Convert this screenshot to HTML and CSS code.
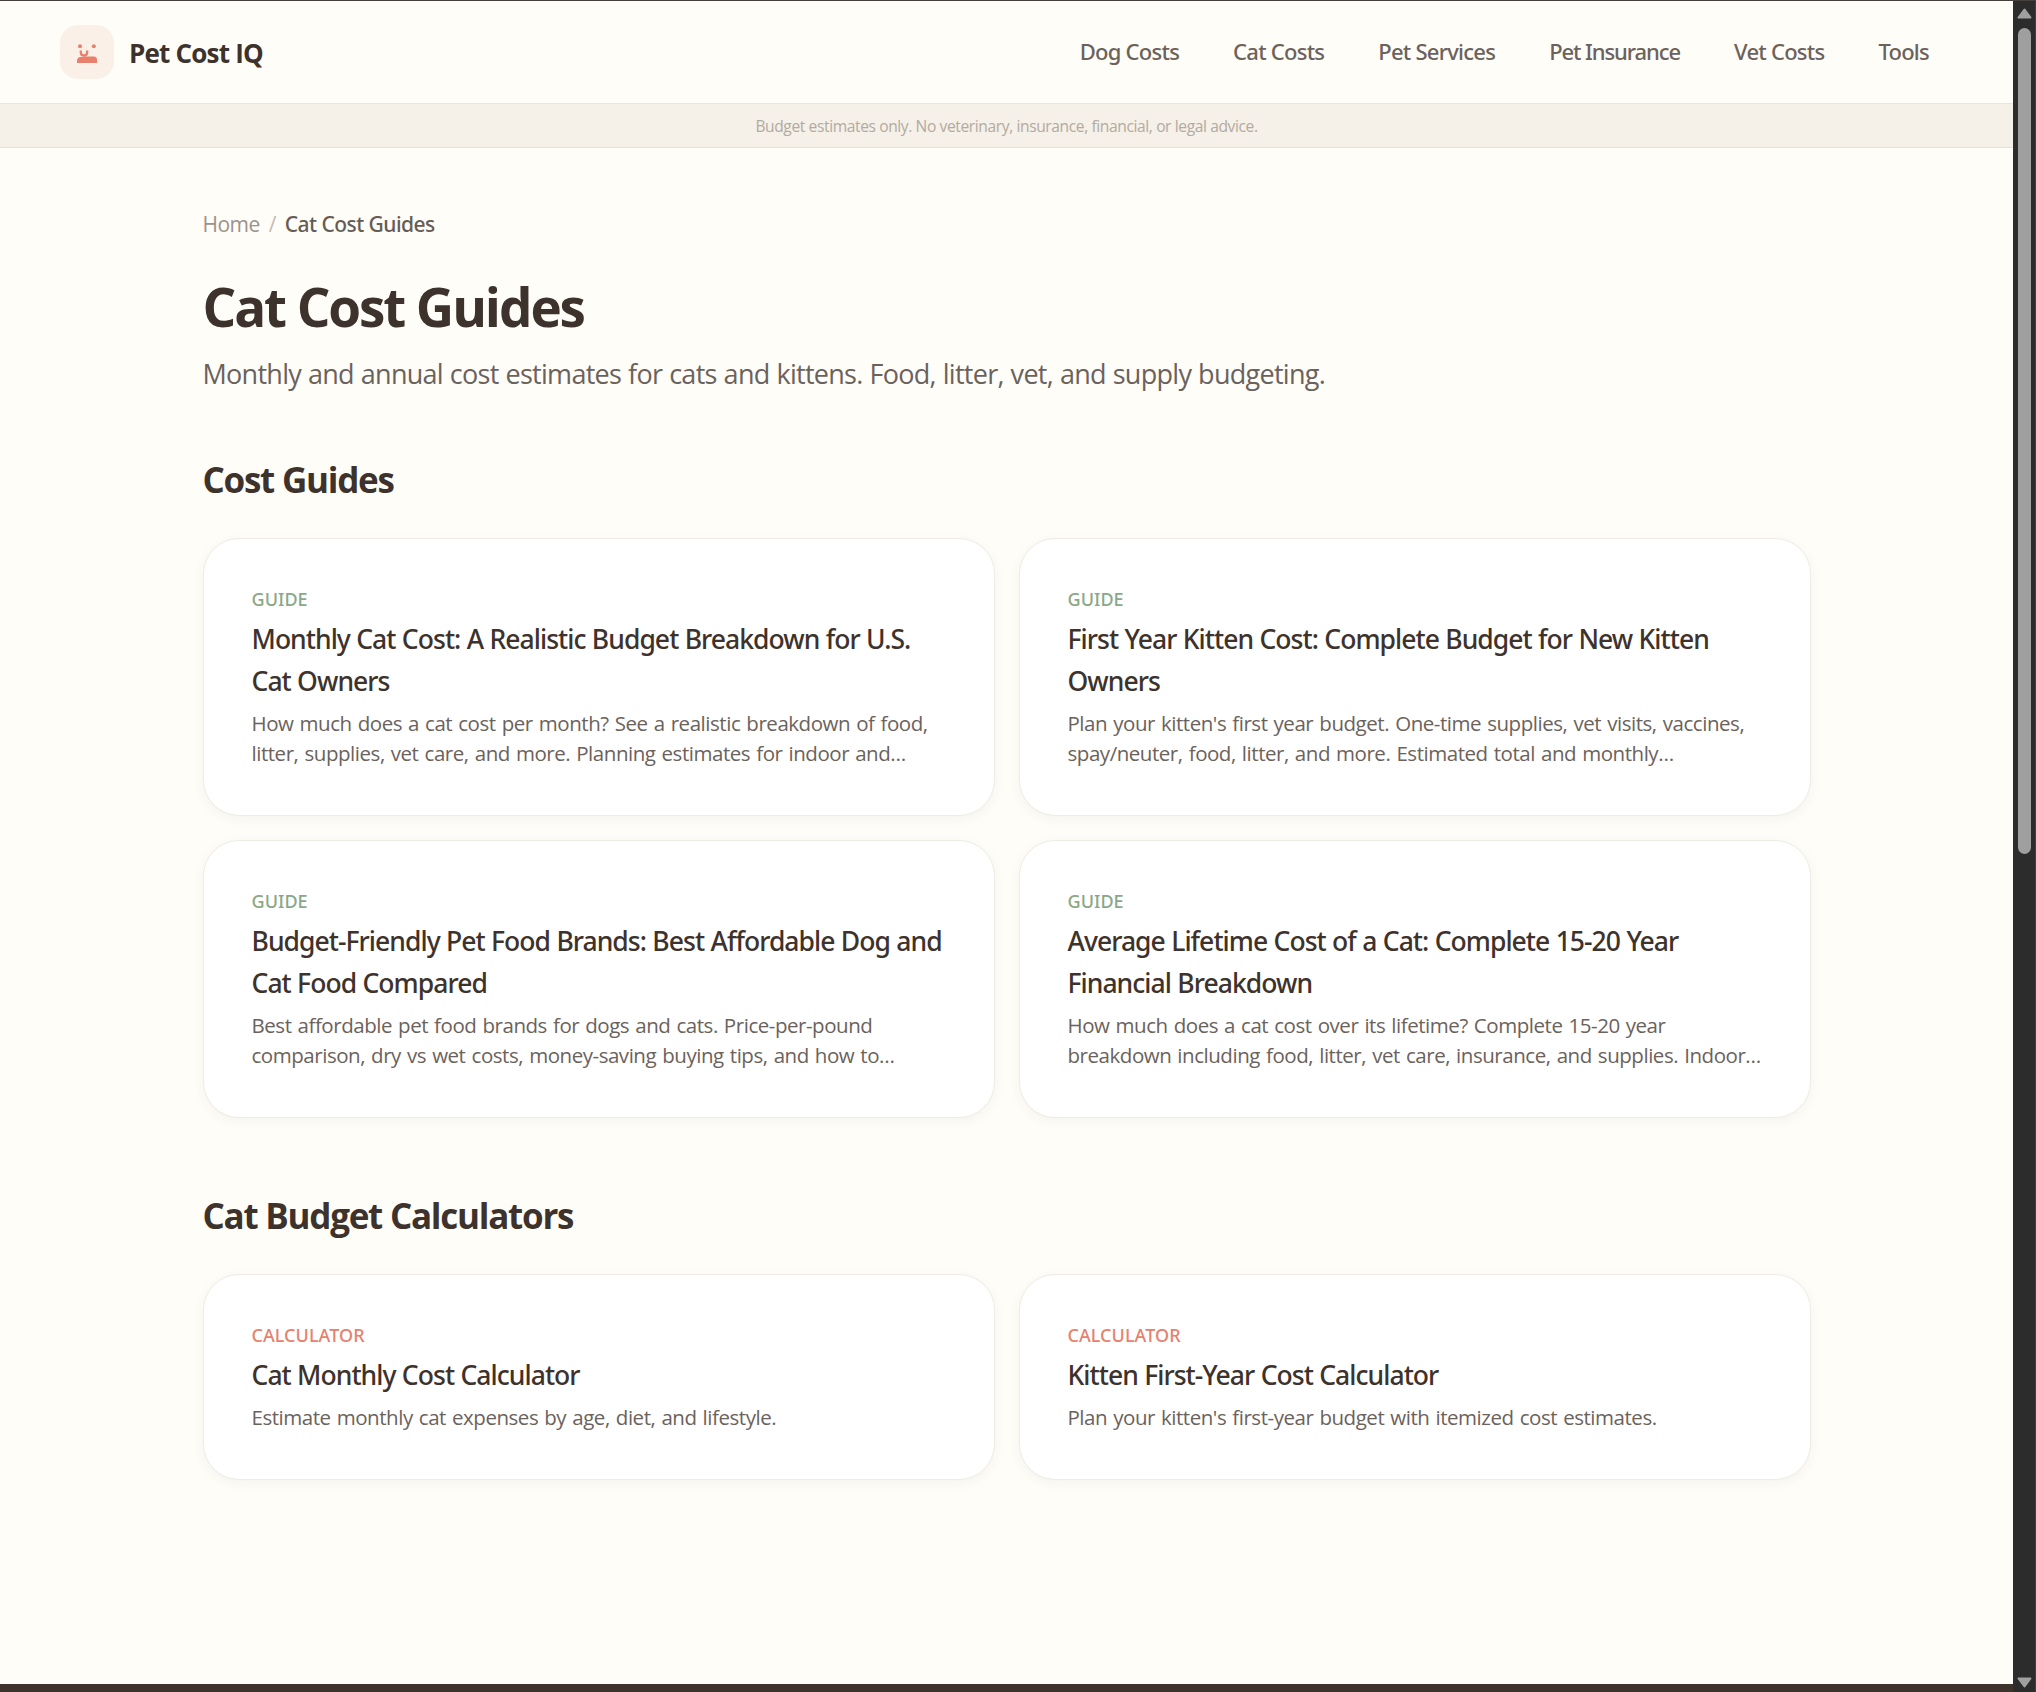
FILE: index.html
```html
<!DOCTYPE html>
<html lang="en">
  <head>
    <meta charset="utf-8">
    <title>Cat Cost Guides | Pet Cost IQ</title>
    <link rel="stylesheet" href="styles.css">
  </head>
  <body>
    <div class="page">
      <header class="site-header">
        <a class="logo" href="#">
          <span class="logo-mark">
            <svg width="54" height="54" viewBox="0 0 54 54">
              <circle cx="20" cy="21.3" r="2" fill="#e8806c"/>
              <circle cx="33.8" cy="21.3" r="2" fill="#e8806c"/>
              <path d="M20.8 25.4v2c0 2 1.2 3.1 3.1 3.1s3.2-1.1 3.2-3.1v-2" fill="none" stroke="#e8806c" stroke-width="2.3"/>
              <path d="M17 38v-2.500c0-1.800 1.500-3.500 3.500-3.500h2l2.500-.5h9c2 0 3 1.500 3 3.500v3z" fill="#e8806c"/>
            </svg>
          </span>
          <span class="logo-text">Pet Cost IQ</span>
        </a>
        <nav class="site-nav">
          <a href="#">Dog Costs</a>
          <a href="#">Cat Costs</a>
          <a href="#">Pet Services</a>
          <a href="#" class="long">Pet Insurance</a>
          <a href="#">Vet Costs</a>
          <a href="#">Tools</a>
        </nav>
      </header>
      <div class="disclaimer">Budget estimates only. No veterinary, insurance, financial, or legal advice.</div>

      <main>
        <div class="breadcrumb">
          <a href="#">Home</a>
          <span class="sep">/</span>
          <span class="current">Cat Cost Guides</span>
        </div>
        <h1>Cat Cost Guides</h1>
        <p class="subtitle">Monthly and annual cost estimates for cats and kittens. Food, litter, vet, and supply budgeting.</p>

        <section>
          <h2>Cost Guides</h2>
          <div class="cards">
            <a class="card" href="#">
              <span class="tag">GUIDE</span>
              <h3>Monthly Cat Cost: A Realistic Budget Breakdown for U.S.<br>Cat Owners</h3>
              <p>How much does a cat cost per month? See a realistic breakdown of food,<br>litter, supplies, vet care, and more. Planning estimates for indoor and…</p>
            </a>
            <a class="card" href="#">
              <span class="tag">GUIDE</span>
              <h3>First Year Kitten Cost: Complete Budget for New Kitten<br>Owners</h3>
              <p>Plan your kitten's first year budget. One-time supplies, vet visits, vaccines,<br>spay/neuter, food, litter, and more. Estimated total and monthly…</p>
            </a>
            <a class="card" href="#">
              <span class="tag">GUIDE</span>
              <h3>Budget-Friendly Pet Food Brands: Best Affordable Dog and<br>Cat Food Compared</h3>
              <p>Best affordable pet food brands for dogs and cats. Price-per-pound<br>comparison, dry vs wet costs, money-saving buying tips, and how to…</p>
            </a>
            <a class="card" href="#">
              <span class="tag">GUIDE</span>
              <h3>Average Lifetime Cost of a Cat: Complete 15-20 Year<br>Financial Breakdown</h3>
              <p>How much does a cat cost over its lifetime? Complete 15-20 year<br>breakdown including food, litter, vet care, insurance, and supplies. Indoor…</p>
            </a>
          </div>
        </section>

        <section>
          <h2>Cat Budget Calculators</h2>
          <div class="cards">
            <a class="card" href="#">
              <span class="tag tag-calc">CALCULATOR</span>
              <h3>Cat Monthly Cost Calculator</h3>
              <p>Estimate monthly cat expenses by age, diet, and lifestyle.</p>
            </a>
            <a class="card" href="#">
              <span class="tag tag-calc">CALCULATOR</span>
              <h3>Kitten First-Year Cost Calculator</h3>
              <p>Plan your kitten's first-year budget with itemized cost estimates.</p>
            </a>
          </div>
        </section>
      </main>
      <footer></footer>
    </div>

    <div class="scrollbar">
      <svg width="15" height="11" viewBox="0 0 15 11"><path d="M7.500 1.500L13.500 9.500H1.500z" fill="#a0a0a0" stroke="#a0a0a0" stroke-width="2" stroke-linejoin="round"/></svg>
      <div class="thumb"></div>
      <svg width="15" height="11" viewBox="0 0 15 11"><path d="M7.500 9.500L13.500 1.500H1.500z" fill="#a0a0a0" stroke="#a0a0a0" stroke-width="2" stroke-linejoin="round"/></svg>
    </div>
  </body>
</html>
```
FILE: styles.css
```css
* {
  box-sizing: border-box;
}

body {
  margin: 0;
  height: 1692px;
  display: flex;
  overflow: hidden;
  border-top: 1px solid #45403c;
  background: #fffdf8;
  color: #3d322c;
  font-family: "Open Sans", "Noto Sans", sans-serif;
}

a {
  color: inherit;
  text-decoration: none;
}

h1, h2, h3, p {
  margin: 0;
}

.page {
  flex: 1;
  display: flex;
  flex-direction: column;
}

/* header */
.site-header {
  height: 103px;
  padding: 0 60px;
  display: flex;
  align-items: center;
  justify-content: space-between;
  border-bottom: 1px solid #ebe5dc;
}

.logo {
  display: flex;
  align-items: center;
  gap: 15px;
}

.logo-mark {
  width: 54px;
  height: 54px;
  border-radius: 18px;
  background: #faf0e8;
}

.logo-mark svg {
  display: block;
}

.logo-text {
  padding-top: 2px;
  font-size: 26px;
  font-weight: 700;
  letter-spacing: -0.8px;
}

.site-nav {
  display: flex;
  gap: 6px;
  padding-bottom: 2px;
}

.site-nav a {
  padding: 0 24px;
  font-family: "Noto Sans", sans-serif;
  font-size: 22px;
  font-weight: 500;
  letter-spacing: -0.75px;
  color: #6b625c;
}

.site-nav a.long {
  letter-spacing: -1.08px;
}

.disclaimer {
  height: 44px;
  line-height: 44px;
  border-bottom: 1px solid #e8dfd5;
  background: #f5f0e8;
  text-align: center;
  font-size: 15.6px;
  letter-spacing: -0.4px;
  color: #b3aaa0;
}

/* content */
main {
  width: 1608px;
  margin: 0 auto;
  padding-top: 61px;
  flex: 1;
}

.breadcrumb {
  display: flex;
  gap: 9px;
  font-size: 21px;
  line-height: 30px;
  letter-spacing: -0.55px;
  color: #9c928a;
}

.breadcrumb .sep {
  color: #c4bcb4;
}

.breadcrumb .current {
  font-family: "Noto Sans", sans-serif;
  font-weight: 500;
  color: #665c55;
}

h1 {
  margin-top: 34px;
  font-size: 53px;
  line-height: 67px;
  letter-spacing: -2.1px;
}

.subtitle {
  margin-top: 13px;
  font-size: 27px;
  line-height: 42px;
  letter-spacing: -0.72px;
  word-spacing: 0.6px;
  color: #6b625c;
}

h2 {
  font-size: 35px;
  line-height: 48px;
  letter-spacing: -1.25px;
}

section {
  margin-top: 61px;
}

section + section {
  margin-top: 74px;
}

.cards {
  margin-top: 34px;
  display: grid;
  grid-template-columns: repeat(2, minmax(0, 1fr));
  gap: 24px;
}

.card {
  padding: 48px 48px 47px;
  border: 1px solid #f0ebe4;
  border-radius: 36px;
  background: #fff;
  box-shadow: 0 3px 12px rgba(61, 50, 44, 0.05);
  white-space: nowrap;
}

.tag {
  display: block;
  font-family: "Noto Sans", sans-serif;
  font-size: 18px;
  font-weight: 500;
  line-height: 24px;
  letter-spacing: 0.05px;
  color: #8aa888;
}

.tag-calc {
  color: #e8806c;
}

.card h3 {
  margin: 7px 0 6px;
  font-family: "Noto Sans", sans-serif;
  font-size: 26.5px;
  font-weight: 500;
  line-height: 42px;
  letter-spacing: -0.95px;
  word-spacing: 0.4px;
}

.card p {
  font-size: 20.5px;
  line-height: 30px;
  letter-spacing: -0.46px;
  word-spacing: 1.2px;
  color: #6b625c;
}

footer {
  height: 8px;
  background: #3d322c;
}

/* scrollbar */
.scrollbar {
  width: 23px;
  padding: 7px 0 4px;
  display: flex;
  flex-direction: column;
  align-items: center;
  background: #2c2c2c;
  border-right: 1px solid #3c403e;
}

.scrollbar .thumb {
  width: 13px;
  height: 826px;
  margin: 9px 0 auto;
  border-radius: 7px;
  background: #9f9f9f;
}
```
